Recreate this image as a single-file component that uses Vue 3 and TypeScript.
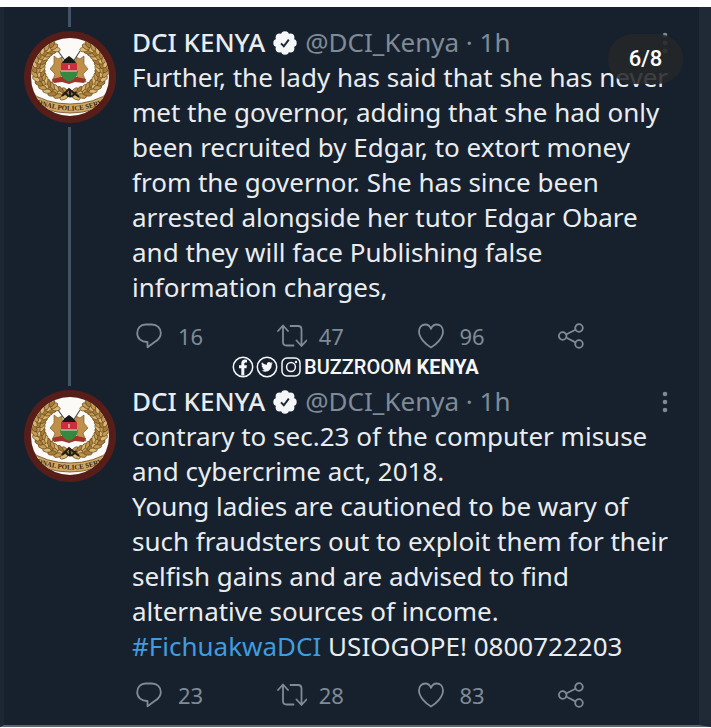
<script setup lang="ts">
interface Tweet {
  id: string
  lines: string
  hashtag?: string
  tail?: string
  replies: number
  retweets: number
  likes: number
}

const tweets: Tweet[] = [
  {
    id: 'first',
    lines:
      'Further, the lady has said that she has never\nmet the governor, adding that she had only\nbeen recruited by Edgar, to extort money\nfrom the governor. She has since been\narrested alongside her tutor Edgar Obare\nand they will face Publishing false\ninformation charges,',
    replies: 16,
    retweets: 47,
    likes: 96,
  },
  {
    id: 'second',
    lines:
      'contrary to sec.23 of the computer misuse\nand cybercrime act, 2018.\nYoung ladies are cautioned to be wary of\nsuch fraudsters out to exploit them for their\nselfish gains and are advised to find\nalternative sources of income.\n',
    hashtag: '#FichuakwaDCI',
    tail: ' USIOGOPE! 0800722203',
    replies: 23,
    retweets: 28,
    likes: 83,
  },
]

interface Leaf {
  x: number
  y: number
  turn: number
  fill: string
}

// Three rings of leaves on each side form the laurel wreath.
const leaves: Leaf[] = []
const tones = ['#c39a55', '#a87c3a', '#dbb873']
for (const side of [-1, 1]) {
  for (let i = 0; i < 15; i++) {
    const angle = 10 + i * 10
    const rad = (angle * Math.PI) / 180
    for (let ring = 0; ring < 3; ring++) {
      const r = 28 + ring * 4
      leaves.push({
        x: 46 + side * Math.sin(rad) * r,
        y: 38 + Math.cos(rad) * r * 0.8,
        turn: side * (-angle + (ring - 1) * 32),
        fill: tones[(i + ring) % 3],
      })
    }
  }
}
</script>

<template>
  <main class="thread">
    <article v-for="(tweet, index) in tweets" :key="tweet.id" class="tweet">
      <div class="rail">
        <span class="line line-top"></span>
        <svg class="avatar" viewBox="0 0 92 92" role="img" aria-label="National Police Service emblem">
          <defs>
            <path :id="'ribbon-' + tweet.id" d="M9 71 Q46 88 83 71" />
            <clipPath :id="'disc-' + tweet.id"><circle cx="46" cy="46" r="39" /></clipPath>
          </defs>
          <circle cx="46" cy="46" r="46" fill="#571d18" />
          <circle cx="46" cy="46" r="39" fill="#fbfaf7" />
          <g :clip-path="'url(#disc-' + tweet.id + ')'">
            <ellipse
              v-for="(leaf, n) in leaves"
              :key="n"
              cx="0"
              cy="0"
              rx="4.2"
              ry="2.2"
              :fill="leaf.fill"
              stroke="#6b4c1d"
              stroke-width=".7"
              :transform="`translate(${leaf.x} ${leaf.y}) rotate(${leaf.turn})`"
            />
            <path d="M4 60 Q22 73 46 73 Q70 73 88 60 V69 Q70 82 46 82 Q22 82 4 69Z" fill="#cfa866" stroke="#6d4b20" stroke-width=".8" />
          </g>
          <path d="M38 65 L45 58 L55 66 M41 61 Q46 70 52 61 M46 58 V65" fill="none" stroke="#211d17" stroke-width="2" />
          <path d="M34 20 L50 42 M56 20 L42 42" stroke="#56504b" stroke-width="1.2" />
          <path d="M30 25 L34 28 L38 26 L39 38 L36 50 L28 51 L31 43 L26 38 L30 33Z" fill="#c08f4a" stroke="#71501f" stroke-width=".6" />
          <path d="M60 25 L56 28 L52 26 L51 38 L54 50 L62 51 L59 43 L64 38 L60 33Z" fill="#c08f4a" stroke="#71501f" stroke-width=".6" />
          <path d="M28 48 L37 46 H53 L62 48 L60 52 L51 51 L45 53 L38 51 L30 52Z" fill="#9e342c" />
          <path d="M38 32 Q39 29 45 25 Q51 29 52 32Z" fill="#181817" />
          <path d="M37 32 H53 V40 H37Z" fill="#cb2e3d" />
          <path d="M36 40 H54 Q54 47 45 51 Q36 47 36 40Z" fill="#37883f" />
          <path d="M37 40 H53 M45 34 V38" stroke="#f0d9d0" stroke-width="1.2" />
          <text class="ribbon-text">
            <textPath :href="'#ribbon-' + tweet.id" startOffset="50%" text-anchor="middle">ONAL POLICE SERV</textPath>
          </text>
        </svg>
        <span v-if="index < tweets.length - 1" class="line line-rest"></span>
      </div>

      <div class="content">
        <header class="head">
          <span class="name">DCI KENYA</span>
          <svg class="verified" viewBox="0 0 24 24" role="img" aria-label="Verified">
            <g fill="#f4f6f8">
              <circle cx="12" cy="12" r="9" />
              <circle cx="12" cy="4.3" r="4" />
              <circle cx="17.4" cy="6.6" r="4" />
              <circle cx="19.7" cy="12" r="4" />
              <circle cx="17.4" cy="17.4" r="4" />
              <circle cx="12" cy="19.7" r="4" />
              <circle cx="6.6" cy="17.4" r="4" />
              <circle cx="4.3" cy="12" r="4" />
              <circle cx="6.6" cy="6.6" r="4" />
            </g>
            <path d="M8 12.4 L10.8 15.2 L15.8 8.6" fill="none" stroke="#1b2530" stroke-width="1.9" />
          </svg>
          <span class="handle">@DCI_Kenya · 1h</span>
          <button class="menu" type="button" aria-label="More">
            <svg viewBox="0 0 6 22" width="6" height="22">
              <g fill="#7d8994">
                <circle cx="3" cy="3" r="2.3" />
                <circle cx="3" cy="11" r="2.3" />
                <circle cx="3" cy="19" r="2.3" />
              </g>
            </svg>
          </button>
        </header>

        <p class="body">{{ tweet.lines }}<a v-if="tweet.hashtag" class="tag" href="#">{{ tweet.hashtag }}</a>{{ tweet.tail }}</p>

        <footer class="actions">
          <button class="action" type="button" aria-label="Reply">
            <svg viewBox="0 0 26 26" class="icon">
              <path d="M9.5 1.5 H16 C21 1.5 24.8 5 24.8 10 C24.8 14 22.5 16.8 19 18.8 L11.5 24.3 V19 C5.5 19.2 1.2 15.5 1.2 10.2 C1.2 5.2 4.8 1.5 9.5 1.5Z" />
            </svg>
            <span>{{ tweet.replies }}</span>
          </button>
          <button class="action retweet" type="button" aria-label="Retweet">
            <svg viewBox="0 0 30 26" class="icon wide">
              <path d="M1 8 L6 2.5 L11 8 M6 3 V19 Q6 22.5 9.5 22.5 H16.5 M13.5 3 H21 Q24.5 3 24.5 6.5 V22 M19.5 17.5 L24.5 23 L29.5 17.5" />
            </svg>
            <span>{{ tweet.retweets }}</span>
          </button>
          <button class="action" type="button" aria-label="Like">
            <svg viewBox="0 0 26 26" class="icon">
              <path d="M13 24.5 C8 21.5 1 15 1 8.5 C1 4.2 3.8 1.5 7.3 1.5 C10 1.5 12 3.3 13 5.8 C14 3.3 16 1.5 18.7 1.5 C22.2 1.5 25 4.2 25 8.5 C25 15 18 21.5 13 24.5Z" />
            </svg>
            <span>{{ tweet.likes }}</span>
          </button>
          <button class="action" type="button" aria-label="Share">
            <svg viewBox="0 0 26 26" class="icon">
              <path d="M8.5 11.2 L17.5 6.8 M8.5 14.8 L17.5 19.4" />
              <circle cx="4.7" cy="13" r="3.8" />
              <circle cx="21" cy="5" r="3.8" />
              <circle cx="21" cy="21" r="3.8" />
            </svg>
          </button>
        </footer>
      </div>

      <div v-if="index === 0" class="watermark">
        <svg viewBox="0 0 22 22" class="social">
          <circle cx="11" cy="11" r="9.7" />
          <path class="solid" d="M9.3 19.5 V12.3 H7 V9.3 H9.3 V7.5 C9.3 4.9 10.8 3.6 13 3.6 L15 3.8 V6.4 H13.7 C12.6 6.4 12.3 7 12.3 7.8 V9.3 H14.9 L14.5 12.3 H12.3 V19.5Z" />
        </svg>
        <svg viewBox="0 0 22 22" class="social">
          <circle cx="11" cy="11" r="9.7" />
          <path class="solid" d="M16.8 7.3 L15.5 7.7 L16.4 6.2 L14.8 6.8 C13.1 5 10.5 6.3 10.9 8.7 C8.9 8.6 7.2 7.7 6 6.2 C5.2 7.6 5.5 8.9 6.7 9.7 L5.6 9.4 C5.7 10.8 6.4 11.6 7.6 12 H6.5 C6.9 13 7.7 13.6 8.7 13.6 C7.7 14.4 6.5 14.8 5.2 14.6 C9.9 17.4 15.8 14.6 15.7 8.7Z" />
        </svg>
        <svg viewBox="0 0 22 22" class="social">
          <rect x="2" y="2" width="18" height="18" rx="5" />
          <circle cx="11" cy="11" r="4.4" />
          <circle class="solid" cx="16" cy="6" r="1.2" />
        </svg>
        <span class="brand">BUZZROOM <b>KENYA</b></span>
      </div>
    </article>

    <div class="counter">6/8</div>
  </main>
</template>

<style>
body {
  margin: 0;
  background: #fdfdfd;
}
</style>

<style scoped>
.thread {
  position: relative;
  margin-top: 7px;
  background: #17212d;
  border-left: 4px solid #1c2731;
  border-right: 12px solid #1f2a36;
  border-bottom: 2px solid #5d6670;
  font-family: "Noto Sans", "Open Sans", sans-serif;
  color: #e9edf0;
}

.tweet {
  position: relative;
  display: flex;
}

.rail {
  flex: none;
  width: 128px;
  display: flex;
  flex-direction: column;
  align-items: flex-start;
  gap: 4px;
}

.line {
  width: 3px;
  margin-left: 64px;
  background: #405465;
}

.line-top {
  height: 20px;
}

.line-rest {
  flex: 1;
}

.avatar {
  width: 92px;
  height: 92px;
  margin-left: 20px;
}

.ribbon-text {
  font: bold 7px "Liberation Serif", serif;
  fill: #3b2812;
}

.content {
  flex: 1;
  min-width: 0;
  padding: 18px 0 16px;
}

.head {
  display: flex;
  align-items: center;
  height: 35px;
  font-size: 26px;
  line-height: 35px;
  white-space: nowrap;
}

.name {
  font-weight: 500;
}

.verified {
  width: 24px;
  height: 24px;
  margin: 0 8px;
}

.handle {
  color: #7f8b97;
}

button {
  display: flex;
  align-items: center;
  padding: 0;
  border: 0;
  background: none;
  font: inherit;
  color: inherit;
}

.menu {
  margin-left: auto;
  margin-right: 31px;
}

.body {
  margin: 0;
  font-size: 26px;
  line-height: 35px;
  white-space: pre-line;
}

.tag {
  color: #409cdf;
  text-decoration: none;
}

.actions {
  display: grid;
  grid-template-columns: repeat(4, 1fr);
  height: 28px;
  margin-top: 17px;
  padding-left: 4px;
  color: #7f8b97;
  font-size: 22px;
  line-height: 28px;
}

.action {
  gap: 16px;
}

.retweet {
  gap: 12px;
}

.icon {
  width: 26px;
  height: 26px;
  fill: none;
  stroke: #7f8b97;
  stroke-width: 1.8;
  stroke-linejoin: round;
  stroke-linecap: round;
}

.wide {
  width: 30px;
}

.watermark {
  position: absolute;
  left: 228px;
  bottom: -12px;
  display: flex;
  align-items: center;
  gap: 2px;
  color: #f6f7f8;
}

.social {
  width: 22px;
  height: 22px;
  fill: none;
  stroke: #f6f7f8;
  stroke-width: 1.5;
}

.solid {
  fill: #f6f7f8;
  stroke: none;
}

.brand {
  font: 500 20px/22px Roboto, sans-serif;
  white-space: nowrap;
}

.counter {
  position: absolute;
  top: 27px;
  right: 16px;
  width: 75px;
  border-radius: 25px;
  background: rgba(38, 39, 41, 0.88);
  color: #ffffff;
  font: 500 22px/50px Roboto, sans-serif;
  text-align: center;
}
</style>
